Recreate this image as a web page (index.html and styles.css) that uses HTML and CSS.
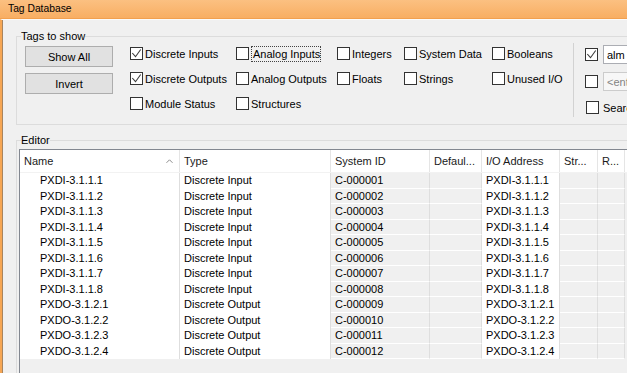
FILE: index.html
```html
<!DOCTYPE html>
<html lang="en">

<head>
    <meta charset="UTF-8">
    <title>Tag Database</title>
    <link rel="stylesheet" href="styles.css">
</head>

<body>
    <div class="window">
        <div class="titlebar">Tag Database</div>
        <div class="frame">
            <fieldset class="group tags">
                <legend>Tags to show</legend>
                <div class="tags-body">
                    <div class="buttons">
                        <button class="btn">Show All</button>
                        <button class="btn">Invert</button>
                    </div>
                    <div class="filters">
                        <label class="check"><span class="box"><svg viewBox="0 0 11 11" width="11" height="11"><polyline points="1.3,5 4.5,8.7 9.7,1.5" /></svg></span>Discrete Inputs</label>
                        <label class="check"><span class="box"></span><span class="focus">Analog Inputs</span></label>
                        <label class="check"><span class="box"></span>Integers</label>
                        <label class="check"><span class="box"></span>System Data</label>
                        <label class="check"><span class="box"></span>Booleans</label>
                        <label class="check"><span class="box"><svg viewBox="0 0 11 11" width="11" height="11"><polyline points="1.3,5 4.5,8.7 9.7,1.5" /></svg></span>Discrete Outputs</label>
                        <label class="check"><span class="box"></span>Analog Outputs</label>
                        <label class="check"><span class="box"></span>Floats</label>
                        <label class="check"><span class="box"></span>Strings</label>
                        <label class="check"><span class="box"></span>Unused I/O</label>
                        <label class="check"><span class="box"></span>Module Status</label>
                        <label class="check"><span class="box"></span>Structures</label>
                    </div>
                    <div class="search">
                        <div class="search-row">
                            <span class="box"><svg viewBox="0 0 11 11" width="11" height="11"><polyline points="1.3,5 4.5,8.7 9.7,1.5" /></svg></span>
                            <input class="text" type="text" value="alm">
                        </div>
                        <div class="search-row">
                            <span class="box"></span>
                            <input class="text" type="text" value="<enter text>" disabled>
                        </div>
                        <label class="check search-check"><span class="box"></span>Search descriptions</label>
                    </div>
                </div>
            </fieldset>

            <fieldset class="group editor">
                <legend>Editor</legend>
                <div class="list">
                    <div class="list-head">
                        <div class="hcell name-head">Name
                            <svg class="sort" viewBox="0 0 7 4" width="7" height="4"><polyline points="0.5,3.8 3.5,0.8 6.5,3.8" /></svg>
                        </div>
                        <div class="hcell">Type</div>
                        <div class="hcell">System ID</div>
                        <div class="hcell">Defaul...</div>
                        <div class="hcell">I/O Address</div>
                        <div class="hcell">Str...</div>
                        <div class="hcell">R...</div>
                        <div class="hfill"></div>
                    </div>
                    <div class="rows" id="rows"></div>
                </div>
            </fieldset>
        </div>
    </div>
    <script>
        const tags = [
            ["PXDI-3.1.1.1", "Discrete Input"],
            ["PXDI-3.1.1.2", "Discrete Input"],
            ["PXDI-3.1.1.3", "Discrete Input"],
            ["PXDI-3.1.1.4", "Discrete Input"],
            ["PXDI-3.1.1.5", "Discrete Input"],
            ["PXDI-3.1.1.6", "Discrete Input"],
            ["PXDI-3.1.1.7", "Discrete Input"],
            ["PXDI-3.1.1.8", "Discrete Input"],
            ["PXDO-3.1.2.1", "Discrete Output"],
            ["PXDO-3.1.2.2", "Discrete Output"],
            ["PXDO-3.1.2.3", "Discrete Output"],
            ["PXDO-3.1.2.4", "Discrete Output"]
        ];

        const rowsEl = document.getElementById("rows");

        tags.forEach((tag, i) => {
            const id = "C-" + String(i + 1).padStart(6, "0");
            const row = document.createElement("div");
            row.className = "row";
            row.innerHTML =
                `<div class="cell name">${tag[0]}</div>` +
                `<div class="cell">${tag[1]}</div>` +
                `<div class="cell ro">${id}</div>` +
                `<div class="cell ro"></div>` +
                `<div class="cell">${tag[0]}</div>` +
                `<div class="cell ro"></div>` +
                `<div class="cell ro"></div>`;
            rowsEl.appendChild(row);
        });
    </script>
</body>

</html>
```

FILE: styles.css
```css
* {
    box-sizing: border-box;
}

body {
    margin: 0;
    font-family: "Liberation Sans", Arial, sans-serif;
    font-size: 11px;
    color: #000;
    background-color: #f0f0f0;
}

.window {
    width: 627px;
    height: 373px;
    overflow: hidden;
    display: flex;
    flex-direction: column;
    background-color: #f0f0f0;
}

.titlebar {
    flex: none;
    height: 19px;
    padding-left: 8px;
    line-height: 18px;
    font-size: 10.3px;
    background: linear-gradient(#fbc081, #f8ae63);
    border-bottom: 1px solid #f2a04f;
}

.frame {
    flex: 1;
    border-left: 2px solid #f6a654;
    box-shadow: inset 1px 0 0 #a8845f;
    border-top: 1px solid #fbfbfb;
    padding-left: 14px;
}

.group {
    margin: 0;
    padding: 0 0 0 4px;
    width: 660px;
    min-width: 0;
    border: 1px solid #dcdcdc;
}

.group legend {
    padding: 0;
    height: 14px;
    line-height: 14px;
}

.tags {
    margin-top: 9px;
    padding-bottom: 7px;
}

.tags-body {
    display: flex;
    align-items: flex-start;
}

.buttons {
    display: flex;
    flex-direction: column;
    gap: 6px;
    margin: 3px 0 0 4px;
}

.btn {
    width: 88px;
    height: 21px;
    padding: 0;
    font: inherit;
    color: #000;
    background-color: #e1e1e1;
    border: 1px solid #adadad;
}

.filters {
    display: grid;
    grid-template-columns: 106px 101px 67px 88px 81px;
    grid-auto-rows: 13px;
    row-gap: 12px;
    margin: 4px 0 0 17px;
}

.check {
    display: flex;
    align-items: center;
    gap: 2px;
    height: 13px;
    white-space: nowrap;
}

.box {
    flex: none;
    width: 13px;
    height: 13px;
    border: 1px solid #333;
    background-color: #fff;
    display: flex;
}

.box polyline {
    fill: none;
    stroke: #3c3c3c;
    stroke-width: 1.1;
}

.focus {
    border: 1px dotted #444;
    padding: 1px 0 1px 1px;
    line-height: 12px;
}

.search {
    display: flex;
    flex-direction: column;
    height: 74px;
    padding-left: 11px;
    border-left: 1px solid #d2d2d2;
}

.search-row {
    display: flex;
    align-items: center;
    gap: 5px;
    height: 19px;
    margin-top: 2px;
}

.search-row + .search-row {
    margin-top: 8px;
}

.text {
    width: 120px;
    height: 19px;
    padding: 0 3px;
    font: inherit;
    color: #000;
    background-color: #fff;
    border: 1px solid #abadb3;
    outline: none;
}

.text:disabled {
    color: #838383;
    background-color: #f7f7f7;
    border-color: #cccccc;
}

.search-check {
    margin: 10px 0 0 1px;
    gap: 4px;
}

.editor {
    margin-top: 8px;
    padding: 2px 0 0 2px;
}

.editor legend {
    margin-left: 2px;
}

.list {
    height: 260px;
    border: 1px solid #828790;
    border-right: none;
    background-color: #f0f0f0;
}

.list-head,
.row {
    display: grid;
    grid-template-columns: 160px 151px 99px 52px 78px 38px 27px 1fr;
}

.list-head {
    height: 23px;
    background-color: #fff;
    border-bottom: 1px solid #f2f2f2;
}

.hcell {
    padding-left: 4px;
    line-height: 22px;
    white-space: nowrap;
    overflow: hidden;
    color: #1a1a1a;
    border-right: 1px solid #e5e5e5;
}

.name-head {
    display: flex;
    justify-content: space-between;
    align-items: center;
    padding-right: 6px;
}

.sort polyline {
    fill: none;
    stroke: #8c8c8c;
    stroke-width: 1;
}

.row {
    grid-template-columns: 160px 151px 99px 52px 78px 38px 27px;
    height: 16px;
}

.row:nth-child(even) {
    height: 15px;
}

.cell {
    padding-left: 4px;
    line-height: 15px;
    white-space: nowrap;
    overflow: hidden;
    background-color: #fff;
    border-right: 1px solid #dedede;
}

.cell.name {
    padding-left: 20px;
}

.cell.ro {
    background-color: #f0f0f0;
    border-bottom: 1px solid #fff;
}
```
